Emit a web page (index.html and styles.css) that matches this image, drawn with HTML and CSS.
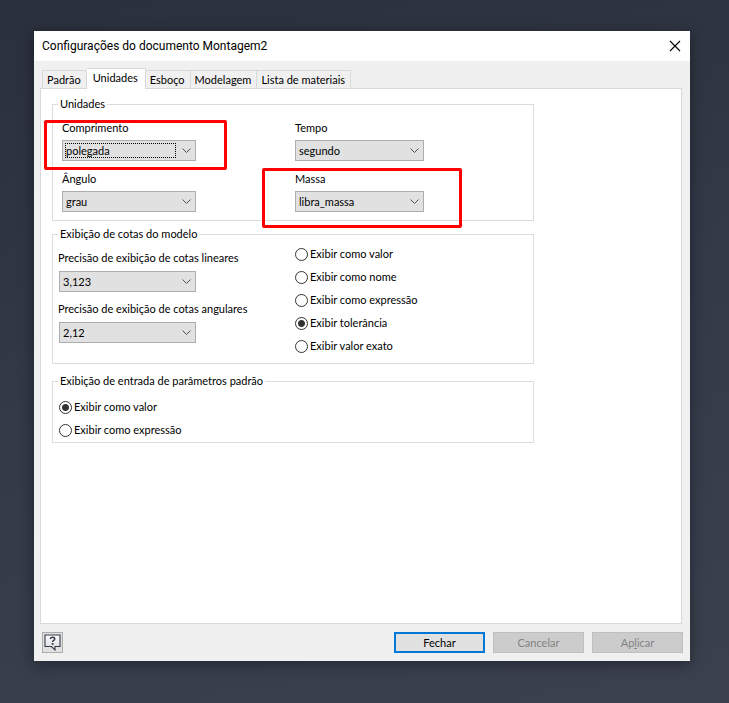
FILE: index.html
```html
<!DOCTYPE html>
<html lang="pt-BR">
<head>
<meta charset="utf-8">
<title>Configurações do documento Montagem2</title>
<link rel="stylesheet" href="styles.css">
</head>
<body>
<main class="dialog" role="dialog" aria-labelledby="dialog-title">
  <header class="titlebar">
    <h1 class="title" id="dialog-title">Configurações do documento Montagem2</h1>
    <button class="close" type="button" aria-label="Fechar janela">
      <svg width="12" height="12" viewBox="0 0 12 12" fill="none" stroke="#000" stroke-width="1.1"><path d="M1 1l10 10M11 1L1 11"/></svg>
    </button>
  </header>
  <nav class="tabs" role="tablist">
    <button class="tab" type="button" role="tab">Padrão</button>
    <button class="tab tab-active" type="button" role="tab" aria-selected="true">Unidades</button>
    <button class="tab" type="button" role="tab">Esboço</button>
    <button class="tab" type="button" role="tab">Modelagem</button>
    <button class="tab" type="button" role="tab">Lista de materiais</button>
  </nav>
  <form class="panel" id="settings">
    <fieldset class="group group-units">
      <legend>Unidades</legend>
      <div class="columns">
        <div class="field field-marked mark-length">
          <label for="length">Comprimento</label>
          <span class="combo combo-focused"><select id="length"><option>polegada</option></select><svg class="chevron" viewBox="0 0 9 5"><path d="M.5 .5l4 4 4-4"/></svg></span>
        </div>
        <div class="field">
          <label for="time">Tempo</label>
          <span class="combo combo-narrow"><select id="time"><option>segundo</option></select><svg class="chevron" viewBox="0 0 9 5"><path d="M.5 .5l4 4 4-4"/></svg></span>
        </div>
        <div class="field">
          <label for="angle">Ângulo</label>
          <span class="combo"><select id="angle"><option>grau</option></select><svg class="chevron" viewBox="0 0 9 5"><path d="M.5 .5l4 4 4-4"/></svg></span>
        </div>
        <div class="field field-marked mark-mass">
          <label for="mass">Massa</label>
          <span class="combo combo-narrow"><select id="mass"><option>libra_massa</option></select><svg class="chevron" viewBox="0 0 9 5"><path d="M.5 .5l4 4 4-4"/></svg></span>
        </div>
      </div>
    </fieldset>
    <fieldset class="group group-model">
      <legend>Exibição de cotas do modelo</legend>
      <div class="columns">
        <div class="stack">
          <div class="field">
            <label for="linear">Precisão de exibição de cotas lineares</label>
            <span class="combo combo-wide"><select id="linear"><option>3,123</option></select><svg class="chevron" viewBox="0 0 9 5"><path d="M.5 .5l4 4 4-4"/></svg></span>
          </div>
          <div class="field">
            <label for="angular">Precisão de exibição de cotas angulares</label>
            <span class="combo combo-wide"><select id="angular"><option>2,12</option></select><svg class="chevron" viewBox="0 0 9 5"><path d="M.5 .5l4 4 4-4"/></svg></span>
          </div>
        </div>
        <div class="radios">
          <label class="radio"><input type="radio" name="model">Exibir como valor</label>
          <label class="radio"><input type="radio" name="model">Exibir como nome</label>
          <label class="radio"><input type="radio" name="model">Exibir como expressão</label>
          <label class="radio"><input type="radio" name="model" checked>Exibir tolerância</label>
          <label class="radio"><input type="radio" name="model">Exibir valor exato</label>
        </div>
      </div>
    </fieldset>
    <fieldset class="group group-input">
      <legend>Exibição de entrada de parâmetros padrão</legend>
      <div class="radios">
        <label class="radio"><input type="radio" name="entry" checked>Exibir como valor</label>
        <label class="radio"><input type="radio" name="entry">Exibir como expressão</label>
      </div>
    </fieldset>
  </form>
  <footer class="footer">
    <button class="help" type="button" aria-label="Ajuda">
      <svg width="17" height="17" viewBox="0 0 17 17">
        <defs><linearGradient id="bubble" x2="0" y2="1"><stop stop-color="#fff"/><stop offset="1" stop-color="#d5d8dd"/></linearGradient></defs>
        <path d="M1 1h15v11.500h-5v3.500L7.500 12.500H1z" fill="url(#bubble)" stroke="#333a48" stroke-width="1.100"/>
        <path d="M6.500 5v-.5q.3-1.200 2.100-1.200Q10.700 3.300 10.700 4.900q0 1-1.100 1.500-1 .5-1 1.600" fill="none" stroke="#333a48" stroke-width="1.500"/>
        <path d="M7.700 9h1.800v1.800H7.700z" fill="#333a48"/>
      </svg>
    </button>
    <button class="action action-default" type="button">Fechar</button>
    <button class="action" type="button" disabled>Cancelar</button>
    <button class="action" type="button" disabled>Ap<u>l</u>icar</button>
  </footer>
</main>
</body>
</html>
```
FILE: styles.css
```css
* { box-sizing: border-box; }

body {
  margin: 0;
  min-height: 100vh;
  display: flex;
  padding: 31px 39px 42px 34px;
  background: linear-gradient(165deg, #2a303c, #323947 45%, #3b414f);
  color: #000;
  font: 11px/14px Lato, Tahoma, sans-serif;
}

button, select, input { font: inherit; color: inherit; margin: 0; }

.dialog {
  flex: 1;
  display: flex;
  flex-direction: column;
  background: #f0f0f0;
  box-shadow: 0 3px 14px rgba(0, 0, 0, 0.4);
}

.titlebar {
  display: flex;
  align-items: center;
  justify-content: space-between;
  height: 30px;
  padding: 0 9px 0 8px;
  background: #fff;
}

.title { margin: 0; font: 400 12px/16px Roboto, "Noto Sans", sans-serif; }

.close { display: flex; padding: 0; border: 0; background: none; }

.tabs {
  display: flex;
  align-items: flex-end;
  height: 27px;
  padding: 0 8px;
}

.tab {
  height: 18px;
  padding: 1px 5px 0 4px;
  border: 1px solid #d9d9d9;
  border-width: 1px 1px 0 0;
  background: #f0f0f0;
  white-space: nowrap;
}

.tab:first-child { border-left-width: 1px; }

.tab-active {
  position: relative;
  height: 21px;
  margin-bottom: -1px;
  padding: 0 7px 2px 6px;
  background: #fff;
}

.panel {
  flex: 1;
  display: flex;
  flex-direction: column;
  margin: 0 8px 0 6px;
  padding: 8px 11px;
  border: 1px solid #d9d9d9;
  background: #fff;
}

.group {
  width: 100%;
  max-width: 482px;
  min-width: 0;
  margin: 0 0 6px;
  border: 1px solid #dcdcdc;
}

.group-units { padding: 10px 9px 8px; }
.group-model { padding: 10px 6px 10px; }
.group-input { margin-top: 4px; padding: 12px 6px 5px; }

legend { padding: 0 2px; }
.group-units legend { margin-left: -4px; }
.group-model legend, .group-input legend { margin-left: -1px; }

.columns { display: grid; grid-template-columns: 233px 1fr; row-gap: 11px; }
.group-model .columns { grid-template-columns: 236px 1fr; }
.stack { display: flex; flex-direction: column; gap: 10px; }

.field { position: relative; display: flex; flex-direction: column; gap: 5px; align-items: flex-start; }
.stack .field { gap: 6px; }
.stack label { margin-left: -1px; }

.combo { position: relative; display: grid; width: 134px; height: 21px; }
.combo-narrow { width: 129px; }
.combo-wide { width: 137px; }

.combo select {
  grid-area: 1 / 1;
  appearance: none;
  padding: 1px 20px 0 3px;
  border: 1px solid #adadad;
  border-radius: 0;
  background: #e1e1e1;
  outline: 0;
}

.chevron {
  grid-area: 1 / 1;
  place-self: center end;
  width: 9px;
  height: 5px;
  margin-right: 5px;
  fill: none;
  stroke: #505050;
  pointer-events: none;
}

.combo-focused::after {
  content: "";
  position: absolute;
  inset: 3px 20px 3px 3px;
  border: 1px dotted #000;
  pointer-events: none;
}

.field-marked::after {
  content: "";
  position: absolute;
  border: 3px solid #f00;
  border-radius: 2px;
  pointer-events: none;
}

.mark-length::after { inset: -1px 68px -9px -18px; }
.mark-mass::after { inset: -4px 62px -16px -33px; }

.radios { display: flex; flex-direction: column; gap: 9px; }
.group-model .radios { margin-top: -4px; }

.radio { display: flex; align-items: center; gap: 2px; }

.radio input {
  appearance: none;
  width: 13px;
  height: 13px;
  border: 1px solid #333;
  border-radius: 50%;
  background: #fff;
}

.radio input:checked { background: radial-gradient(circle, #333 3px, #fff 4px); }

.footer {
  display: flex;
  gap: 8px;
  padding: 8px 7px 8px 8px;
}

.help {
  display: flex;
  width: 21px;
  height: 21px;
  margin-right: auto;
  padding: 1px;
  border: 1px solid #adadad;
  background: #e1e1e1;
}

.action {
  width: 91px;
  height: 21px;
  padding: 0;
  border: 1px solid #adadad;
  background: #e1e1e1;
}

.action-default { border: 2px solid #0078d7; }
.action:disabled { border-color: #bfbfbf; background: #ccc; color: #838383; }
```
